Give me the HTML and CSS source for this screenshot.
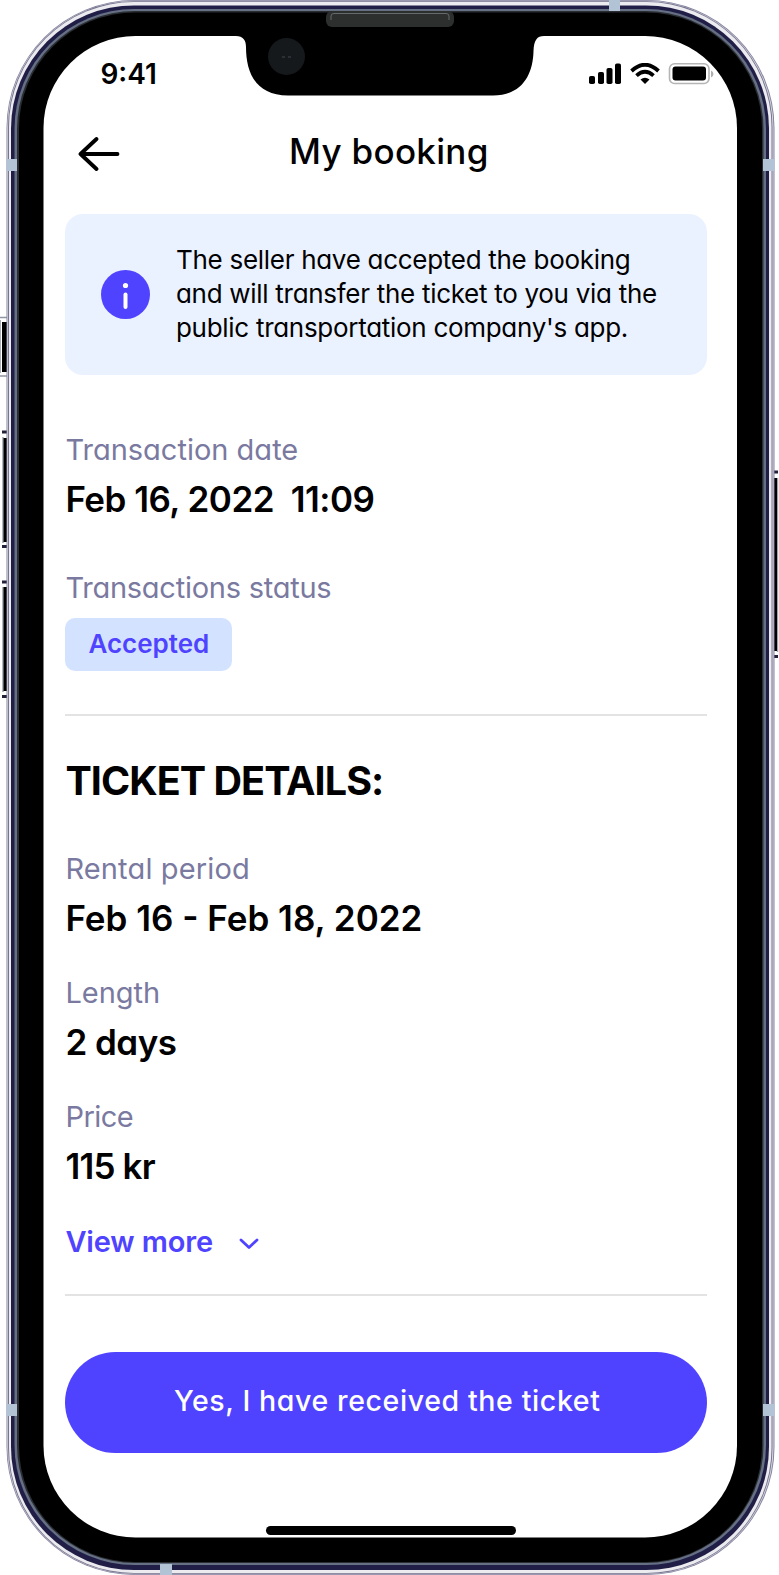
FILE: index.html
```html
<!DOCTYPE html>
<html lang="en">
<head>
    <meta charset="UTF-8">
    <meta name="viewport" content="width=device-width, initial-scale=1.0">
    <title>My booking</title>
    <link rel="stylesheet" href="styles.css">
</head>
<body>

    <div class="phone">
        <!-- Phone body -->
        <svg class="phone-frame" width="779" height="1575" viewBox="0 0 779 1575" aria-hidden="true">
            <!-- Side buttons -->
            <path d="M0 317.500H8M0 376H8M0 320V373" fill="none" stroke="#8f95a3" stroke-width="1.500"/>
            <rect x="2" y="322" width="6" height="50"/>
            <path d="M2 432H8M2 546.500H8M2 582H8M2 696.500H8M772 472H778M772 656.500H778" stroke="#23213a" stroke-width="3"/>
            <path d="M3 437V543M3 587V692M777.500 478V652" stroke="#9aa3a8" stroke-width="1.500"/>
            <rect x="3.500" y="438" width="4" height="104"/>
            <rect x="3.500" y="587" width="4" height="104"/>
            <rect x="773" y="478" width="4" height="173"/>
            <!-- Metal edge -->
            <rect x="6.500" y="0" width="768" height="1575" rx="128" fill="#8482a0"/>
            <rect x="7.300" y="0.800" width="766.200" height="1573.400" rx="127" fill="#d9d9e0"/>
            <rect x="8" y="1.200" width="764.500" height="1572.600" rx="126" fill="#77758f"/>
            <rect x="9" y="2" width="762.500" height="1571" rx="125" fill="#ececf0"/>
            <rect x="11" y="5.500" width="758" height="1564.500" rx="123" fill="#201e46"/>
            <rect x="14.500" y="9" width="751.500" height="1556" rx="120" fill="#667085"/>
            <rect x="17" y="11" width="746.500" height="1552" rx="118" fill="#2a2d32"/>
            <rect x="19" y="12.500" width="743" height="1549.500" rx="116"/>
            <!-- Antenna bands -->
            <g fill="#b3c3d6">
                <rect x="6.500" y="159" width="10.500" height="12"/>
                <rect x="763" y="159" width="11.500" height="12"/>
                <rect x="6.500" y="1404" width="10.500" height="12"/>
                <rect x="763" y="1404" width="11.500" height="12"/>
                <rect x="609" y="0" width="11" height="11"/>
                <rect x="160" y="1564" width="12" height="11"/>
            </g>
            <rect x="43.500" y="36" width="693.500" height="1501.500" rx="92" fill="#fff"/>
            <!-- Notch -->
            <path d="M236 35V36C243 36 246 40 246 47C246 73 256 95.500 288 95.500H493C521 95.500 533 76 533.500 51C534 40 537 36 544 36V35Z"/>
            <rect x="326" y="11" width="128" height="16" rx="6" fill="#2d2f2f"/>
            <path d="M331 20V16Q331 13.500 334 13.500H446Q449 13.500 449 16V20" fill="none" stroke="#666a6b"/>
            <circle cx="286.500" cy="56.500" r="18.500" fill="#15191c"/>
            <path d="M282 57H285M288 57H291" stroke="#2b3037" stroke-width="2"/>
        </svg>

        <div class="screen">
            <!-- Status bar -->
            <div class="status-bar">
                <span class="time">9:41</span>
                <svg class="status-icons" width="126" height="22" viewBox="0 0 126 22" aria-hidden="true">
                    <rect x="0" y="13" width="6" height="8" rx="1.800"/>
                    <rect x="9" y="9" width="6" height="12" rx="1.800"/>
                    <rect x="17.500" y="5" width="6" height="16" rx="1.800"/>
                    <rect x="26" y="0.500" width="6" height="20.500" rx="1.800"/>
                    <g fill="none" stroke="#000" stroke-width="3.800">
                        <path d="M42.500 8Q56 -4.500 69.500 8"/>
                        <path d="M47.500 12.700Q56 5 64.500 12.700"/>
                    </g>
                    <path d="M51.500 16.500Q56 13 60.500 16.500L56 21Z"/>
                    <rect x="80.500" y="0.800" width="39.500" height="19.700" rx="5" fill="none" stroke="#b5b5b5" stroke-width="1.600"/>
                    <rect x="83.500" y="3.500" width="33.500" height="14" rx="3"/>
                    <path d="M122 7.500Q124.500 8.500 124.500 11Q124.500 13.500 122 14.500Z" fill="#b0b0b0"/>
                </svg>
            </div>

            <!-- Header -->
            <div class="header">
                <svg class="back" width="42" height="34" viewBox="0 0 42 34" aria-label="Back">
                    <path d="M18.500 2L2.500 17L18.500 32M3 17H39.500" fill="none" stroke="#000" stroke-width="3.800" stroke-linecap="round" stroke-linejoin="round"/>
                </svg>
                <h1>My booking</h1>
            </div>

            <!-- Info message -->
            <div class="notice">
                <svg width="49" height="49" viewBox="0 0 49 49" aria-hidden="true">
                    <circle cx="24.500" cy="24.500" r="24.500" fill="#4f43ff"/>
                    <circle cx="24.500" cy="15.500" r="2.600" fill="#fff"/>
                    <path d="M24.500 24.500V37" stroke="#fff" stroke-width="4" stroke-linecap="round"/>
                </svg>
                <p>
                    <span class="line">The seller have accepted the booking</span>
                    <span class="line">and will transfer the ticket to you via the</span>
                    <span class="line">public transportation company's app.</span>
                </p>
            </div>

            <!-- Transaction -->
            <div class="field transaction-date">
                <span class="label">Transaction date</span>
                <span class="value">Feb 16, 2022&nbsp; 11:09</span>
            </div>
            <div class="field transaction-status">
                <span class="label">Transactions status</span>
                <span class="badge">Accepted</span>
            </div>

            <hr>

            <!-- Ticket details -->
            <h2>TICKET DETAILS:</h2>
            <div class="field period">
                <span class="label">Rental period</span>
                <span class="value">Feb 16 - Feb 18, 2022</span>
            </div>
            <div class="field length">
                <span class="label">Length</span>
                <span class="value">2 days</span>
            </div>
            <div class="field price">
                <span class="label">Price</span>
                <span class="value">115 kr</span>
            </div>
            <a class="view-more">
                <span>View more</span>
                <svg width="20" height="12" viewBox="0 0 20 12" aria-hidden="true">
                    <path d="M2 2L10 9.500L18 2" fill="none" stroke="#4f43ff" stroke-width="2.800" stroke-linecap="round" stroke-linejoin="round"/>
                </svg>
            </a>

            <hr class="bottom-line">

            <button class="confirm">Yes, I have received the ticket</button>
            <div class="home-bar"></div>
        </div>
    </div>

</body>
</html>
```
FILE: styles.css
```css
/* General Styling */
* {
    box-sizing: border-box;
}
body {
    margin: 0;
    background: #fff;
    color: #000;
    font-family: Inter, "Liberation Sans", sans-serif;
    font-feature-settings: "cv11";
}
h1, h2, p {
    margin: 0;
}
/* Phone */
.phone {
    position: relative;
    width: 779px;
    height: 1575px;
    overflow: hidden;
}
.phone-frame {
    position: absolute;
    top: 0;
    left: 0;
}
.screen {
    position: relative;
    display: flex;
    flex-direction: column;
    height: 1537px;
    padding: 36px 72px 0 65.4px;
}
.screen > * {
    flex-shrink: 0;
}
/* Status bar */
.status-bar {
    display: flex;
    justify-content: space-between;
    align-items: center;
    height: 75px;
    margin-right: -8px;
    padding-left: 35px;
}
.time {
    font-size: 28px;
    font-weight: 600;
}
/* Header */
.header {
    display: flex;
    align-items: center;
    height: 84px;
    padding-left: 12.6px;
}
.back {
    margin-top: 2px;
}
h1 {
    margin-left: 169px;
    padding-bottom: 4px;
    font-size: 35px;
    font-weight: 500;
    letter-spacing: 0.3px;
    line-height: 42px;
    white-space: nowrap;
}
/* Info message */
.notice {
    display: flex;
    align-items: center;
    gap: 26px;
    height: 161px;
    margin-top: 19px;
    padding-left: 35.6px;
    border-radius: 18px;
    background: #ebf2ff;
}
.notice svg {
    flex: none;
}
.notice p {
    padding-bottom: 2px;
}
.line {
    display: block;
    font-size: 26px;
    letter-spacing: -0.29px;
    line-height: 34px;
    white-space: nowrap;
}
/* Fields */
.field {
    display: flex;
    flex-direction: column;
    align-items: flex-start;
}
.label {
    color: #7a799f;
    font-size: 29px;
    line-height: 36px;
}
.value {
    margin-top: 10px;
    font-size: 35px;
    font-weight: 600;
    letter-spacing: -0.5px;
    line-height: 42px;
    white-space: nowrap;
}
.transaction-date {
    margin-top: 57px;
}
.transaction-status {
    margin-top: 50px;
}
.transaction-status .label {
    letter-spacing: -0.25px;
}
.badge {
    height: 52.5px;
    margin-top: 12px;
    padding: 0 23px;
    border-radius: 10px;
    background: #d3e3ff;
    color: #4f43ff;
    font-size: 26px;
    font-weight: 600;
    line-height: 51px;
}
hr {
    width: 100%;
    height: 2px;
    margin: 43.5px 0 0;
    border: 0;
    background: #e3e3e3;
}
h2 {
    margin-top: 41px;
    font-size: 39.5px;
    font-weight: 700;
    letter-spacing: -0.95px;
    line-height: 48px;
}
.period {
    margin-top: 46px;
}
.period .label {
    letter-spacing: 0.15px;
}
.period .value {
    letter-spacing: 0;
}
.length, .price {
    margin-top: 36px;
}
.price .label {
    letter-spacing: -0.5px;
}
.price .value {
    letter-spacing: -0.8px;
}
/* View more */
.view-more {
    display: flex;
    align-items: center;
    gap: 26px;
    margin-top: 37px;
    color: #4f43ff;
    font-size: 29px;
    font-weight: 600;
    letter-spacing: -0.15px;
    line-height: 36px;
}
.view-more svg {
    margin-top: 3px;
}
.bottom-line {
    margin-top: 34px;
}
/* Bottom button */
.confirm {
    height: 101px;
    margin-top: 56px;
    padding: 0 0 5px 2px;
    border: 0;
    border-radius: 51px;
    background: #4f43ff;
    color: #fff;
    font: inherit;
    font-size: 28.5px;
    font-weight: 500;
    letter-spacing: 0.62px;
}
.home-bar {
    align-self: center;
    width: 250px;
    height: 9px;
    margin-top: 73px;
    margin-left: 9px;
    border-radius: 5px;
    background: #000;
}
```
